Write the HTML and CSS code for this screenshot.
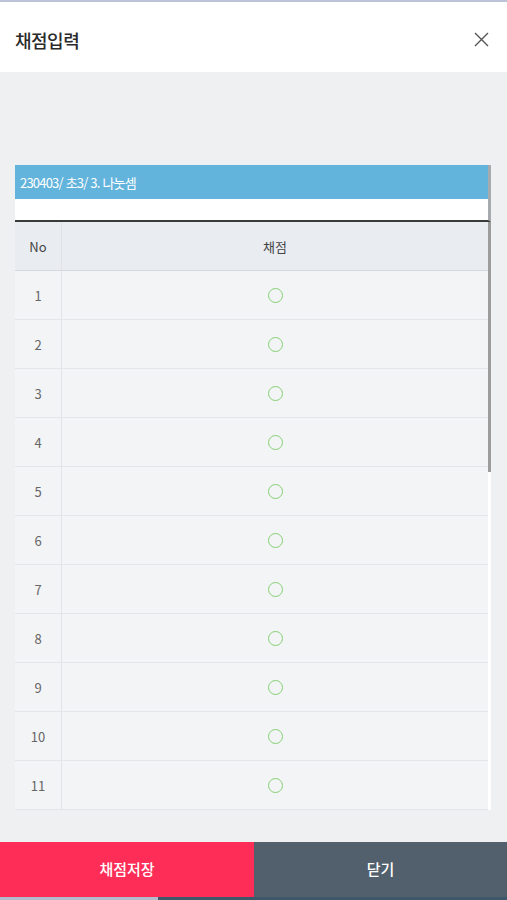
FILE: index.html
```html
<!DOCTYPE html>
<html lang="ko">
<head>
<meta charset="utf-8">
<title>채점입력</title>
<link rel="stylesheet" href="styles.css">
</head>
<body>
<div class="page">
  <div class="topline"></div>
  <header class="header">
    <h1 class="title">채점입력</h1>
    <button class="close" aria-label="닫기">
      <svg width="15" height="15" viewBox="0 0 15 15"><path d="M1 1L14 14M14 1L1 14" stroke="#555" stroke-width="1.4" fill="none"/></svg>
    </button>
  </header>
  <main class="main">
    <section class="box">
      <div class="caption">230403/ 초3/ 3. 나눗셈</div>
      <div class="spacer"></div>
      <div class="grid-wrap">
        <div class="grid">
          <div class="row head"><div class="c-no">No</div><div class="c-score">채점</div></div>
          <div class="row"><div class="c-no">1</div><div class="c-score"><span class="ring"></span></div></div>
          <div class="row"><div class="c-no">2</div><div class="c-score"><span class="ring"></span></div></div>
          <div class="row"><div class="c-no">3</div><div class="c-score"><span class="ring"></span></div></div>
          <div class="row"><div class="c-no">4</div><div class="c-score"><span class="ring"></span></div></div>
          <div class="row"><div class="c-no">5</div><div class="c-score"><span class="ring"></span></div></div>
          <div class="row"><div class="c-no">6</div><div class="c-score"><span class="ring"></span></div></div>
          <div class="row"><div class="c-no">7</div><div class="c-score"><span class="ring"></span></div></div>
          <div class="row"><div class="c-no">8</div><div class="c-score"><span class="ring"></span></div></div>
          <div class="row"><div class="c-no">9</div><div class="c-score"><span class="ring"></span></div></div>
          <div class="row"><div class="c-no">10</div><div class="c-score"><span class="ring"></span></div></div>
          <div class="row"><div class="c-no">11</div><div class="c-score"><span class="ring"></span></div></div>
        </div>
        <div class="scroll"><div class="thumb"></div></div>
      </div>
    </section>
  </main>
  <footer class="footer">
    <div class="buttons">
      <button class="btn save">채점저장</button>
      <button class="btn close-btn">닫기</button>
    </div>
    <div class="bottomline"><span class="bl-left"></span><span class="bl-right"></span></div>
  </footer>
</div>
</body>
</html>
```

FILE: styles.css
```css
* { box-sizing: border-box; }
html, body { margin: 0; padding: 0; }
body {
  font-family: "Noto Sans CJK KR", "Noto Sans", sans-serif;
  background: #eff0f2;
  color: #333;
}
.page {
  width: 507px;
  height: 900px;
  display: flex;
  flex-direction: column;
  overflow: hidden;
}
.topline { height: 2px; background: #bcc3d9; flex: none; }
.header {
  height: 70px;
  flex: none;
  background: #fff;
  display: flex;
  align-items: center;
  justify-content: space-between;
  padding: 5px 18px 0 15px;
}
.title {
  margin: 0;
  font-size: 18px;
  font-weight: 500;
  color: #2a2a2a;
  letter-spacing: -0.5px;
}
.close {
  border: 0;
  background: none;
  padding: 0;
  width: 15px;
  height: 15px;
  display: flex;
}
.main {
  flex: 1;
  padding: 93px 16px 0 15px;
}
.box {
  display: flex;
  flex-direction: column;
}
.caption {
  height: 34px;
  background: #63b4dc;
  color: #fff;
  font-size: 13px;
  letter-spacing: -0.8px;
  display: flex;
  align-items: center;
  padding-left: 5px;
  border-right: 3px solid #a6a9ad;
}
.spacer {
  height: 23px;
  background: #fff;
  border-bottom: 2px solid #3a3a3a;
  border-right: 3px solid #a6a9ad;
}
.grid-wrap { display: flex; }
.grid { flex: 1; }
.row {
  height: 49px;
  display: flex;
  background: #f3f4f6;
  border-bottom: 1px solid #e3e5e8;
  font-size: 13px;
  color: #666;
}
.row.head {
  background: #e9ecf1;
  border-bottom: 1px solid #d4d7db;
  color: #444;
}
.c-no {
  width: 47px;
  border-right: 1px solid #e1e3e6;
  display: flex;
  align-items: center;
  justify-content: center;
}
.c-score {
  flex: 1;
  display: flex;
  align-items: center;
  justify-content: center;
}
.ring {
  width: 15px;
  height: 15px;
  border: 1.8px solid #86d173;
  border-radius: 50%;
}
.scroll {
  width: 3px;
  background: #fff;
  display: flex;
  flex-direction: column;
}
.thumb { height: 250px; background: #9c9c9c; }
.footer { flex: none; }
.buttons { display: flex; height: 55px; }
.btn {
  flex: 1;
  border: 0;
  margin: 0;
  font-family: inherit;
  font-size: 15px;
  font-weight: 500;
  color: #fff;
  display: flex;
  align-items: center;
  justify-content: center;
  padding: 0 0 2px;
}
.save { background: #fe2d57; flex: 0 0 254px; }
.close-btn { background: #52606d; }
.bottomline { display: flex; height: 3px; }
.bl-left { width: 158px; background: #b4bccb; }
.bl-right { flex: 1; background: #3d5868; }
```
